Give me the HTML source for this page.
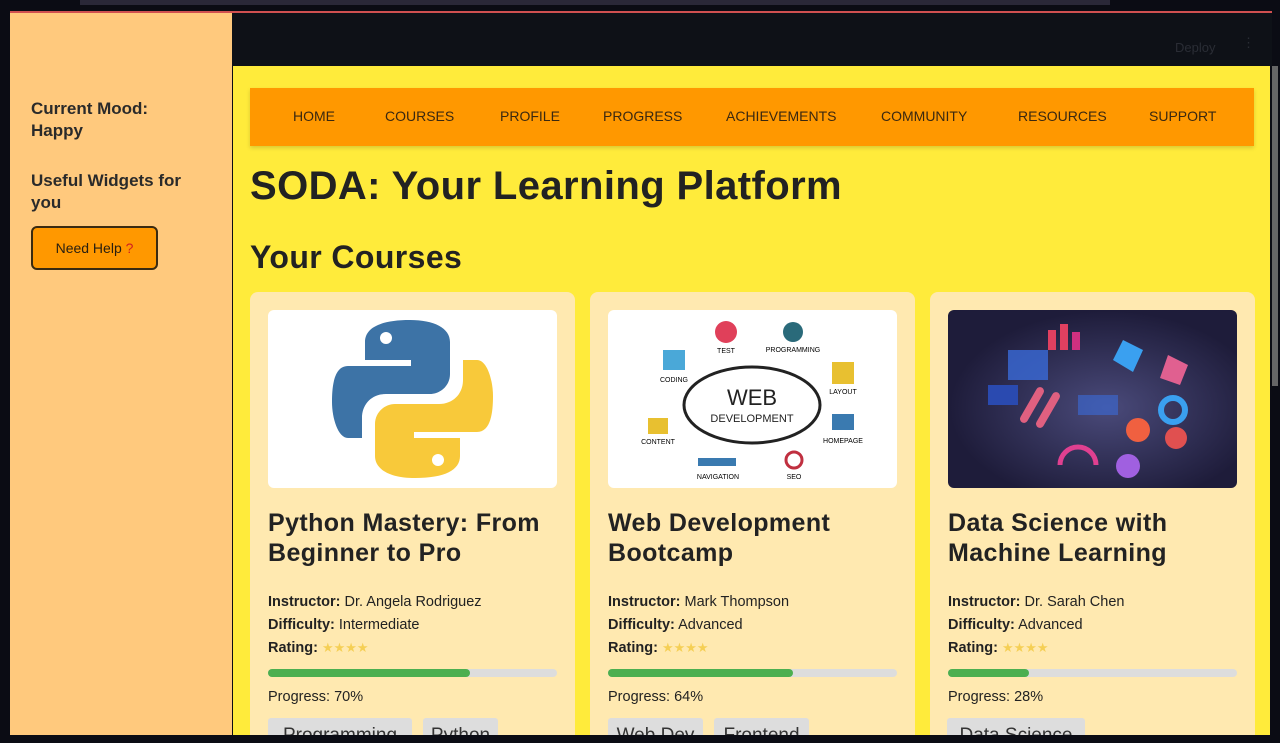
<!DOCTYPE html>
<html><head><meta charset="utf-8"><style>
*{margin:0;padding:0;box-sizing:border-box}
html,body{width:1280px;height:743px;overflow:hidden}
body{background:#0b0c14;position:relative;font-family:"Liberation Sans",sans-serif;color:#222}
.abs{position:absolute}
.side{left:10px;top:13px;width:222px;height:722px;background:#ffc97d}
.side h3{position:absolute;left:21px;font-size:17px;font-weight:bold;line-height:22px;color:#2a2a2a}
.btn{position:absolute;left:21px;top:213px;width:127px;height:44px;border:2px solid #3a2a10;border-radius:6px;background:#ff9800;font-size:14px;line-height:40px;text-align:center;color:#2a2010}
.hdr{left:232px;top:13px;width:1040px;height:53px;background:#0e1117}
.main{left:233px;top:66px;width:1037px;height:669px;background:#ffeb3b}
.nav{left:250px;top:88px;width:1004px;height:58px;background:#ff9800;box-shadow:0 2px 4px rgba(0,0,0,.15)}
.nav span{position:absolute;top:20px;font-size:14px;color:#3a2810}
.card{top:292px;width:325px;height:460px;background:#ffe9b0;border-radius:8px}
.img{position:absolute;left:18px;top:18px;width:289px;height:178px;background:#fff;border-radius:6px;overflow:hidden}
.ct{position:absolute;left:18px;top:216px;font-size:25px;font-weight:bold;line-height:30px;color:#222;letter-spacing:.4px}
.info{position:absolute;left:18px;font-size:14.5px;color:#222}
.bar{position:absolute;left:18px;top:377px;width:289px;height:8px;border-radius:4px;background:#ddd}
.bar i{display:block;height:8px;border-radius:4px;background:#4caf50}
.tag{position:absolute;top:426px;height:34px;background:#ddd;border-radius:3px;font-size:19px;padding:7px 0;text-align:center;color:#333}
.st{color:#f5cf55;font-size:13px;letter-spacing:0}
</style></head><body>
<div class="abs" style="left:80px;top:0;width:1030px;height:5px;background:#2a2838"></div>
<div class="abs" style="left:10px;top:11px;width:1262px;height:2px;background:#d05050"></div>
<div class="abs side">
<h3 style="top:85px">Current Mood:<br>Happy</h3>
<h3 style="top:157px">Useful Widgets for<br>you</h3>
<div class="btn">Need Help <span style="color:#d02020">?</span></div>
</div>
<div class="abs hdr"><span class="abs" style="left:943px;top:27px;font-size:13px;color:#2a2d35">Deploy</span><span class="abs" style="left:1010px;top:22px;font-size:13px;color:#2a2d35">⋮</span></div>
<div class="abs" style="left:1272px;top:66px;width:6px;height:320px;background:#666"></div>
<div class="abs main"></div>
<div class="abs nav">
<span style="left:43px">HOME</span><span style="left:135px">COURSES</span><span style="left:250px">PROFILE</span><span style="left:353px">PROGRESS</span><span style="left:476px">ACHIEVEMENTS</span><span style="left:631px">COMMUNITY</span><span style="left:768px">RESOURCES</span><span style="left:899px">SUPPORT</span>
</div>
<div class="abs" style="left:250px;top:164px;font-size:40px;font-weight:bold;color:#222;letter-spacing:.4px">SODA: Your Learning Platform</div>
<div class="abs" style="left:250px;top:239px;font-size:32px;font-weight:bold;color:#222;letter-spacing:.4px">Your Courses</div>

<div class="abs card" style="left:250px">
<div class="img"><svg width="289" height="178" viewBox="0 0 289 178">
<path d="M142 10c-30 0-45 8-45 22v18h46v6H80c-14 0-16 20-16 36s6 36 16 36h14v-20c0-14 10-24 24-24h44c10 0 20-8 20-20V32c0-14-16-22-40-22z" fill="#3d73a6"/>
<path d="M147 168c30 0 45-8 45-22v-18h-46v-6h63c14 0 16-20 16-36s-6-36-16-36h-14v20c0 14-10 24-24 24h-44c-10 0-20 8-20 20v32c0 14 16 22 40 22z" fill="#f8c93a"/>
<circle cx="118" cy="28" r="6" fill="#fff"/><circle cx="170" cy="150" r="6" fill="#fff"/></svg></div>
<div class="ct">Python Mastery: From<br>Beginner to Pro</div>
<div class="info" style="top:302px"><b>Instructor:</b> Dr. Angela Rodriguez</div>
<div class="info" style="top:325px"><b>Difficulty:</b> Intermediate</div>
<div class="info" style="top:348px"><b>Rating:</b> <span class="st">★★★★</span></div>
<div class="bar"><i style="width:70%"></i></div>
<div class="info" style="top:397px">Progress: 70%</div>
<div class="tag" style="left:18px;width:144px">Programming</div><div class="tag" style="left:173px;width:75px">Python</div>
</div>

<div class="abs card" style="left:590px">
<div class="img"><svg width="289" height="178" viewBox="0 0 289 178" font-family="Liberation Sans">
<ellipse cx="144" cy="95" rx="68" ry="38" fill="#fff" stroke="#222" stroke-width="3"/>
<text x="144" y="95" font-size="22" text-anchor="middle" fill="#222">WEB</text>
<text x="144" y="112" font-size="11" text-anchor="middle" fill="#222">DEVELOPMENT</text>
<circle cx="118" cy="22" r="11" fill="#e0405a"/><text x="118" y="43" font-size="7" text-anchor="middle">TEST</text>
<circle cx="185" cy="22" r="10" fill="#2a6a7a"/><text x="185" y="42" font-size="7" text-anchor="middle">PROGRAMMING</text>
<rect x="55" y="40" width="22" height="20" fill="#4aa8d8"/><text x="66" y="72" font-size="7" text-anchor="middle">CODING</text>
<rect x="224" y="52" width="22" height="22" fill="#e8c030"/><text x="235" y="84" font-size="7" text-anchor="middle">LAYOUT</text>
<rect x="40" y="108" width="20" height="16" fill="#e8c030"/><text x="50" y="134" font-size="7" text-anchor="middle">CONTENT</text>
<rect x="224" y="104" width="22" height="16" fill="#3a7ab0"/><text x="235" y="133" font-size="7" text-anchor="middle">HOMEPAGE</text>
<rect x="90" y="148" width="38" height="8" fill="#3a7ab0"/><text x="110" y="169" font-size="7" text-anchor="middle">NAVIGATION</text>
<circle cx="186" cy="150" r="8" fill="none" stroke="#c03040" stroke-width="3"/><text x="186" y="169" font-size="7" text-anchor="middle">SEO</text>
</svg></div>
<div class="ct">Web Development<br>Bootcamp</div>
<div class="info" style="top:302px"><b>Instructor:</b> Mark Thompson</div>
<div class="info" style="top:325px"><b>Difficulty:</b> Advanced</div>
<div class="info" style="top:348px"><b>Rating:</b> <span class="st">★★★★</span></div>
<div class="bar"><i style="width:64%"></i></div>
<div class="info" style="top:397px">Progress: 64%</div>
<div class="tag" style="left:18px;width:95px">Web Dev</div><div class="tag" style="left:124px;width:95px">Frontend</div>
</div>

<div class="abs card" style="left:930px">
<div class="img" style="background:radial-gradient(ellipse at 55% 55%,#4a4a7a,#1e1c3a 70%)"><svg width="289" height="178" viewBox="0 0 289 178">
<rect x="60" y="40" width="40" height="30" fill="#3a6ad8" opacity=".8"/>
<rect x="100" y="20" width="8" height="20" fill="#e04060"/><rect x="112" y="14" width="8" height="26" fill="#e04060"/><rect x="124" y="22" width="8" height="18" fill="#d03080"/>
<polygon points="175,30 195,40 185,62 165,50" fill="#3aa0f0"/>
<polygon points="220,45 240,55 232,75 212,68" fill="#e06090"/>
<circle cx="225" cy="100" r="12" fill="none" stroke="#3aa0f0" stroke-width="6"/>
<circle cx="190" cy="120" r="12" fill="#f06040"/><circle cx="228" cy="128" r="11" fill="#e05050"/>
<path d="M112 155a18 18 0 0 1 36 0" fill="none" stroke="#e04090" stroke-width="5"/>
<circle cx="180" cy="156" r="12" fill="#a060e0"/>
<rect x="40" y="75" width="30" height="20" fill="#2a4ab0"/>
<rect x="80" y="75" width="8" height="40" rx="4" fill="#e06080" transform="rotate(30 84 95)"/>
<rect x="96" y="80" width="8" height="40" rx="4" fill="#e06080" transform="rotate(30 100 100)"/>
<rect x="130" y="85" width="40" height="20" fill="#3a6ad8" opacity=".6"/>
</svg></div>
<div class="ct">Data Science with<br>Machine Learning</div>
<div class="info" style="top:302px"><b>Instructor:</b> Dr. Sarah Chen</div>
<div class="info" style="top:325px"><b>Difficulty:</b> Advanced</div>
<div class="info" style="top:348px"><b>Rating:</b> <span class="st">★★★★</span></div>
<div class="bar"><i style="width:28%"></i></div>
<div class="info" style="top:397px">Progress: 28%</div>
<div class="tag" style="left:17px;width:138px">Data Science</div>
</div>

<div class="abs" style="left:0;top:735px;width:1280px;height:20px;background:#0b0c14"></div>
<div class="abs" style="left:0;top:0;width:10px;height:743px;background:#0b0c14"></div>
</body></html>
